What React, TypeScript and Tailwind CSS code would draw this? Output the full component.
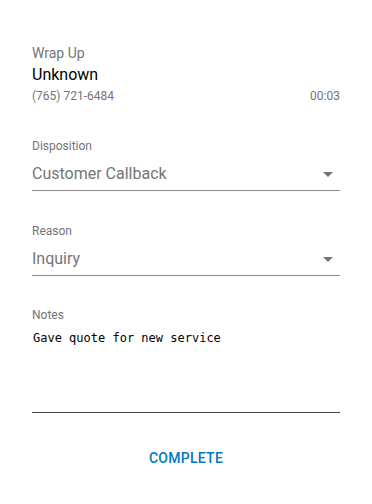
export default function App() {
  return (
    <div className="h-[504px] w-[372px] bg-white font-['Roboto',sans-serif]">
      <div className="flex flex-col px-8 pt-[44px]">
        <p className="text-[14px] leading-[18px] text-[#757575]">Wrap Up</p>
        <p className="mt-[3px] text-[16px] leading-[20px] text-black">Unknown</p>
        <div className="mt-[3px] flex justify-between text-[12px] leading-[16px] text-[#757575]">
          <span>(765) 721-6484</span>
          <span>00:03</span>
        </div>

        <Select label="Disposition" value="Customer Callback" className="mt-[34px]" />
        <Select label="Reason" value="Inquiry" className="mt-[32px]" />

        <div className="mt-[31px] flex flex-col">
          <p className="text-[12px] leading-[16px] text-[#757575]">Notes</p>
          <p className="mt-[7px] h-[82px] pl-[1px] font-['DejaVu_Sans_Mono',monospace] text-[12px] leading-[16px] text-black">
            Gave quote for new service
          </p>
          <div className="h-px bg-[#444]" />
        </div>

        <button className="mt-[35px] self-center text-[14px] font-medium uppercase tracking-[0.02em] text-[#0277bd]">
          Complete
        </button>
      </div>
    </div>
  );
}

function Select({ label, value, className }: { label: string; value: string; className?: string }) {
  return (
    <div className={`flex flex-col ${className ?? ""}`}>
      <p className="text-[12px] leading-[16px] text-[#757575]">{label}</p>
      <div className="mt-[10px] flex items-center justify-between border-b border-[#8a8a8a] pb-[6px]">
        <span className="text-[16px] leading-[20px] text-[#757575]">{value}</span>
        <svg width="10" height="5" viewBox="0 0 10 5" className="mr-[7px]">
          <path d="M0 0h10L5 5z" fill="#757575" />
        </svg>
      </div>
    </div>
  );
}
